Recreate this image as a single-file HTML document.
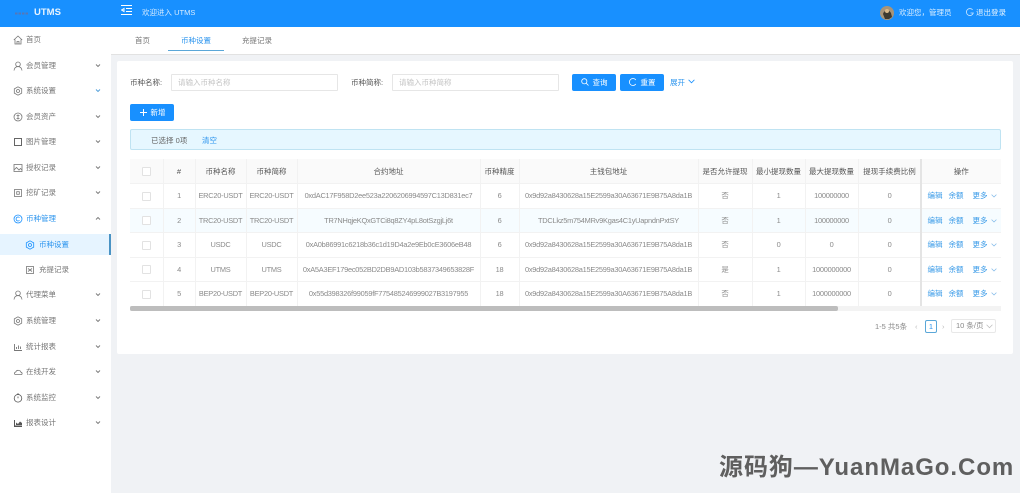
<!DOCTYPE html>
<html lang="zh-CN"><head><meta charset="utf-8"><title>UTMS</title>
<style>
*{box-sizing:border-box}
html,body{margin:0;padding:0;width:1024px;height:493px;overflow:hidden;background:#fff}
body{font-family:"Liberation Sans","Noto Sans CJK SC",sans-serif;font-size:7.500px;color:#595959;position:relative}
#w{position:absolute;left:0;top:0;width:1024px;height:493px;filter:blur(.35px)}
.a{position:absolute;white-space:nowrap}
.m{position:absolute;left:0;width:111px;height:20px;line-height:20px;color:#777}
.m svg.i{position:absolute;left:13px;top:5px}
.m span{position:absolute;left:26px}
.m svg.c{position:absolute;left:95px;top:7px}
table{position:absolute;left:130px;top:159px;width:871px;border-collapse:collapse;table-layout:fixed;font-size:7.400px;letter-spacing:-.24px;color:#8a8a8a}
td,th{border-bottom:1px solid #f2f2f2;border-right:1px solid #f2f2f2;text-align:center;padding:0;white-space:nowrap;overflow:hidden;height:24.500px}
th{background:#fafafa;font-weight:400;color:#555;font-size:7.500px;letter-spacing:0}
td.o{border-right:0;text-align:left;padding-left:6px;font-size:7.500px;letter-spacing:0;color:#3a9be8}
td.o span{display:inline-block;width:15px}
td.o span+span{margin-left:6px}
td.o span+span+span{margin-left:9px}
td.o svg{margin-left:3px;vertical-align:0}
.cb{display:inline-block;width:9px;height:9px;border:1px solid #e2e2e2;border-radius:1px;background:#fff;vertical-align:middle}
.btn{position:absolute;background:#1890ff;border-radius:2px;color:#fff;height:17px;line-height:17px;text-align:center}
.inp{position:absolute;top:74px;height:17px;border:1px solid #e6e6e6;border-radius:1px;background:#fff;color:#c4c4c4;line-height:16px;padding-left:6px}
</style></head><body><div id="w">
<div class="a" style="left:111px;top:0;width:909px;height:493px;background:#f0f2f5"></div>
<div class="a" style="left:0;top:0;width:111px;height:493px;background:#fff"></div>
<div class="a" style="left:0;top:0;width:1020px;height:27px;background:#1890ff"></div>

<svg class="a" style="left:15px;top:11px" width="14" height="5" viewBox="0 0 14 5"><path d="M0 2.500H14" stroke="#5577b8" stroke-width="2" stroke-dasharray="2.500 1"/></svg>
<div class="a" style="left:34px;top:6px;line-height:14px;font-size:9.500px;font-weight:700;color:#e8f4ff">UTMS</div>
<svg class="a" style="left:121px;top:5px" width="12" height="10" viewBox="0 0 12 10" fill="none" stroke="#fff" stroke-width="1"><path d="M0 .5H11M5 3.500H11M5 6.500H11M0 9.500H11M3 3.500L.6 5L3 6.500Z"/></svg>
<div class="a" style="left:142px;top:5.500px;line-height:13px;color:#d6ebff">欢迎进入 UTMS</div>
<svg class="a" style="left:880px;top:6px" width="14" height="14" viewBox="0 0 14 14"><circle cx="7" cy="7" r="7" fill="#a89478"/><path d="M3 8c1-4 6-5 8-1l1 4-3 2H5z" fill="#3d3a30"/><circle cx="7" cy="5" r="2" fill="#d9b98a"/></svg>
<div class="a" style="left:899px;top:6px;line-height:13px;color:#dcefff">欢迎您，管理员</div>
<svg class="a" style="left:966px;top:8px" width="8" height="9" viewBox="0 0 8 9" fill="none" stroke="#cfe8ff" stroke-width=".8"><path d="M6.600 1.800A3.500 3.500 0 1 0 7.300 5H4.500"/></svg>
<div class="a" style="left:976px;top:6px;line-height:13px;color:#e6f4ff">退出登录</div>

<!-- tabs -->
<div class="a" style="left:111px;top:27px;width:909px;height:28px;background:#fff;border-bottom:1px solid #e2e2e2"></div>
<div class="a" style="left:135px;top:33.500px;line-height:13px;color:#777">首页</div>
<div class="a" style="left:181px;top:33.500px;line-height:13px;color:#2b94ee">币种设置</div>
<div class="a" style="left:168px;top:50px;width:56px;height:1px;background:#5aa7d8"></div>
<div class="a" style="left:242px;top:33.500px;line-height:13px;color:#777">充提记录</div>

<!-- sidebar -->
<div class="m" style="top:30px"><svg class="i" width="10" height="10" viewBox="0 0 10 10" fill="none" stroke="#777" stroke-width=".8"><path d="M.8 5L5 1l4.200 4M2 4.500V9h6V4.500M4 9V6.500h2V9"/></svg><span>首页</span></div>
<div class="m" style="top:55.500px"><svg class="i" width="10" height="10" viewBox="0 0 10 10" fill="none" stroke="#777" stroke-width=".8"><circle cx="5" cy="3.300" r="2.300"/><path d="M1 9.500c.4-3 2-3.900 4-3.900s3.600.9 4 3.900"/></svg><span>会员管理</span><svg class="c" width="6" height="5" viewBox="0 0 6 5" fill="none" stroke="#777" stroke-width=".9"><path d="M1 1.500L3 3.500L5 1.500"/></svg></div>
<div class="m" style="top:81px"><svg class="i" width="10" height="10" viewBox="0 0 10 10" fill="none" stroke="#777" stroke-width=".8"><path d="M5 .8l3.700 2.100v4.200L5 9.200 1.300 7.100V2.900z"/><circle cx="5" cy="5" r="1.500"/></svg><span>系统设置</span><svg class="c" width="6" height="5" viewBox="0 0 6 5" fill="none" stroke="#4a9bd8" stroke-width=".9"><path d="M1 1.500L3 3.500L5 1.500"/></svg></div>
<div class="m" style="top:106.500px"><svg class="i" width="10" height="10" viewBox="0 0 10 10" fill="none" stroke="#777" stroke-width=".8"><circle cx="5" cy="5" r="4"/><path d="M3.500 3.500h3M3.500 6.500h3M5 2.500v5"/></svg><span>会员资产</span><svg class="c" width="6" height="5" viewBox="0 0 6 5" fill="none" stroke="#777" stroke-width=".9"><path d="M1 1.500L3 3.500L5 1.500"/></svg></div>
<div class="m" style="top:132px"><svg class="i" width="10" height="10" viewBox="0 0 10 10" fill="none" stroke="#555" stroke-width=".9"><rect x="1.500" y="1.500" width="7" height="7"/></svg><span>图片管理</span><svg class="c" width="6" height="5" viewBox="0 0 6 5" fill="none" stroke="#777" stroke-width=".9"><path d="M1 1.500L3 3.500L5 1.500"/></svg></div>
<div class="m" style="top:158px"><svg class="i" width="10" height="10" viewBox="0 0 10 10" fill="none" stroke="#777" stroke-width=".8"><rect x="1" y="1.500" width="8" height="7"/><path d="M1 7l2.500-2.500L6 7l1.500-1.500L9 7"/></svg><span>授权记录</span><svg class="c" width="6" height="5" viewBox="0 0 6 5" fill="none" stroke="#777" stroke-width=".9"><path d="M1 1.500L3 3.500L5 1.500"/></svg></div>
<div class="m" style="top:183px"><svg class="i" width="10" height="10" viewBox="0 0 10 10" fill="none" stroke="#777" stroke-width=".8"><rect x="1.500" y="1.500" width="7" height="7"/><rect x="3.700" y="3.700" width="2.600" height="2.600"/></svg><span>挖矿记录</span><svg class="c" width="6" height="5" viewBox="0 0 6 5" fill="none" stroke="#777" stroke-width=".9"><path d="M1 1.500L3 3.500L5 1.500"/></svg></div>
<div class="m" style="top:209px;color:#2b94ee"><svg class="i" width="10" height="10" viewBox="0 0 10 10" fill="none" stroke="#1890ff" stroke-width=".8"><circle cx="5" cy="5" r="4"/><path d="M6.500 3.600A2 2 0 1 0 6.500 6.400"/></svg><span>币种管理</span><svg class="c" width="6" height="5" viewBox="0 0 6 5" fill="none" stroke="#777" stroke-width=".9"><path d="M1 3.500L3 1.500L5 3.500"/></svg></div>
<div class="a" style="left:0;top:234px;width:111px;height:21px;background:#e6f4ff;border-right:2px solid #4a93c4"></div>
<div class="m" style="top:234.500px;color:#2b94ee"><svg class="i" style="left:25px" width="10" height="10" viewBox="0 0 10 10" fill="none" stroke="#1890ff" stroke-width=".8"><path d="M5 .8l3.700 2.100v4.200L5 9.200 1.300 7.100V2.900z"/><circle cx="5" cy="5" r="1.500"/></svg><span style="left:39px">币种设置</span></div>
<div class="m" style="top:260px"><svg class="i" style="left:25px" width="10" height="10" viewBox="0 0 10 10" fill="none" stroke="#777" stroke-width=".8"><rect x="1.500" y="1.500" width="7" height="7"/><path d="M3 3.500l4 3M7 3.500l-4 3"/></svg><span style="left:39px">充提记录</span></div>
<div class="m" style="top:285px"><svg class="i" width="10" height="10" viewBox="0 0 10 10" fill="none" stroke="#777" stroke-width=".8"><circle cx="5" cy="3.300" r="2.300"/><path d="M1 9.500c.4-3 2-3.900 4-3.900s3.600.9 4 3.900"/></svg><span>代理菜单</span><svg class="c" width="6" height="5" viewBox="0 0 6 5" fill="none" stroke="#777" stroke-width=".9"><path d="M1 1.500L3 3.500L5 1.500"/></svg></div>
<div class="m" style="top:311px"><svg class="i" width="10" height="10" viewBox="0 0 10 10" fill="none" stroke="#777" stroke-width=".8"><path d="M5 .8l3.700 2.100v4.200L5 9.200 1.300 7.100V2.900z"/><circle cx="5" cy="5" r="1.500"/></svg><span>系统管理</span><svg class="c" width="6" height="5" viewBox="0 0 6 5" fill="none" stroke="#777" stroke-width=".9"><path d="M1 1.500L3 3.500L5 1.500"/></svg></div>
<div class="m" style="top:337px"><svg class="i" width="10" height="10" viewBox="0 0 10 10" fill="none" stroke="#777" stroke-width=".9"><path d="M1.500 2v6.500H9M3.500 7V5M5.500 7V3.500M7.500 7V4.500"/></svg><span>统计报表</span><svg class="c" width="6" height="5" viewBox="0 0 6 5" fill="none" stroke="#777" stroke-width=".9"><path d="M1 1.500L3 3.500L5 1.500"/></svg></div>
<div class="m" style="top:362px"><svg class="i" width="10" height="10" viewBox="0 0 10 10" fill="none" stroke="#777" stroke-width=".8"><path d="M2.500 7.500H8C9.500 7.500 9.500 5.500 8 5.300 7.500 3 3.500 2.500 2.800 5 1 5.300 1 7.500 2.500 7.500Z"/></svg><span>在线开发</span><svg class="c" width="6" height="5" viewBox="0 0 6 5" fill="none" stroke="#777" stroke-width=".9"><path d="M1 1.500L3 3.500L5 1.500"/></svg></div>
<div class="m" style="top:388px"><svg class="i" width="10" height="10" viewBox="0 0 10 10" fill="none" stroke="#555" stroke-width=".8"><circle cx="5" cy="5.300" r="3.800"/><path d="M5 5.300V3.500M4 1h2"/></svg><span>系统监控</span><svg class="c" width="6" height="5" viewBox="0 0 6 5" fill="none" stroke="#777" stroke-width=".9"><path d="M1 1.500L3 3.500L5 1.500"/></svg></div>
<div class="m" style="top:413px"><svg class="i" width="10" height="10" viewBox="0 0 10 10"><path d="M1 2h1v5.500h7V9H1zM3 7V4.500L5 6l2-2.500L9 5v2z" fill="#555"/></svg><span>报表设计</span><svg class="c" width="6" height="5" viewBox="0 0 6 5" fill="none" stroke="#777" stroke-width=".9"><path d="M1 1.500L3 3.500L5 1.500"/></svg></div>

<!-- card -->
<div class="a" style="left:117px;top:61px;width:896px;height:293px;background:#fff;border-radius:2px"></div>
<div class="a" style="left:130px;top:76px;line-height:13px;color:#555">币种名称:</div>
<div class="inp" style="left:171px;width:167px">请输入币种名称</div>
<div class="a" style="left:351px;top:76px;line-height:13px;color:#555">币种简称:</div>
<div class="inp" style="left:392px;width:167px">请输入币种简称</div>
<div class="btn" style="left:572px;top:74px;width:44px;padding-left:12px"><svg class="a" style="left:9px;top:4px" width="8" height="8" viewBox="0 0 8 8" fill="none" stroke="#fff" stroke-width=".8"><circle cx="3.300" cy="3.300" r="2.600"/><path d="M5.200 5.200L7.500 7.500"/></svg>查询</div>
<div class="btn" style="left:620px;top:74px;width:44px;padding-left:12px"><svg class="a" style="left:9px;top:4px" width="8" height="8" viewBox="0 0 8 8" fill="none" stroke="#fff" stroke-width=".8"><path d="M6.800 2A3.500 3.500 0 1 0 6.800 6"/></svg>重置</div>
<div class="a" style="left:670px;top:76px;line-height:13px;color:#2b94ee">展开</div>
<svg class="a" style="left:688px;top:79px" width="7" height="5" viewBox="0 0 7 5" fill="none" stroke="#1890ff" stroke-width=".8"><path d="M.6 .8L3.500 3.800L6.400 .8"/></svg>
<div class="btn" style="left:130px;top:104px;width:44px;padding-left:12px"><svg class="a" style="left:10px;top:5px" width="7" height="7" viewBox="0 0 7 7" stroke="#fff" stroke-width="1"><path d="M3.500 0V7M0 3.500H7"/></svg>新增</div>
<div class="a" style="left:130px;top:129px;width:871px;height:21px;background:#e6f7ff;border:1px solid #bfe3f2;border-radius:2px"></div>
<div class="a" style="left:151px;top:134px;line-height:13px;color:#666">已选择 0项</div>
<div class="a" style="left:202px;top:134px;line-height:13px;color:#2b94ee">清空</div>

<table>
<colgroup><col style="width:33px"><col style="width:32px"><col style="width:51px"><col style="width:51px"><col style="width:183px"><col style="width:39px"><col style="width:179px"><col style="width:54px"><col style="width:53px"><col style="width:53px"><col style="width:63px"><col style="width:80px"></colgroup>
<tr><th><i class="cb"></i></th><th>#</th><th>币种名称</th><th>币种简称</th><th>合约地址</th><th>币种精度</th><th>主钱包地址</th><th>是否允许提现</th><th>最小提现数量</th><th>最大提现数量</th><th>提现手续费比例</th><th style="border-right:0">操作</th></tr>
<tr><td><i class="cb"></i></td><td>1</td><td>ERC20-USDT</td><td>ERC20-USDT</td><td>0xdAC17F958D2ee523a2206206994597C13D831ec7</td><td>6</td><td>0x9d92a8430628a15E2599a30A63671E9B75A8da1B</td><td>否</td><td>1</td><td>100000000</td><td>0</td><td class="o"><span>编辑</span><span>余额</span><span>更多</span><svg width="6" height="4" viewBox="0 0 6 4" fill="none" stroke="#7fb8e8" stroke-width=".7"><path d="M.6 .6L3 3L5.400 .6"/></svg></td></tr>
<tr style="background:#f6fcff"><td><i class="cb"></i></td><td>2</td><td>TRC20-USDT</td><td>TRC20-USDT</td><td>TR7NHqjeKQxGTCi8q8ZY4pL8otSzgjLj6t</td><td>6</td><td>TDCLkz5m754MRv9Kgas4C1yUapndnPxtSY</td><td>否</td><td>1</td><td>100000000</td><td>0</td><td class="o"><span>编辑</span><span>余额</span><span>更多</span><svg width="6" height="4" viewBox="0 0 6 4" fill="none" stroke="#7fb8e8" stroke-width=".7"><path d="M.6 .6L3 3L5.400 .6"/></svg></td></tr>
<tr><td><i class="cb"></i></td><td>3</td><td>USDC</td><td>USDC</td><td>0xA0b86991c6218b36c1d19D4a2e9Eb0cE3606eB48</td><td>6</td><td>0x9d92a8430628a15E2599a30A63671E9B75A8da1B</td><td>否</td><td>0</td><td>0</td><td>0</td><td class="o"><span>编辑</span><span>余额</span><span>更多</span><svg width="6" height="4" viewBox="0 0 6 4" fill="none" stroke="#7fb8e8" stroke-width=".7"><path d="M.6 .6L3 3L5.400 .6"/></svg></td></tr>
<tr><td><i class="cb"></i></td><td>4</td><td>UTMS</td><td>UTMS</td><td>0xA5A3EF179ec052BD2DB9AD103b5837349653828F</td><td>18</td><td>0x9d92a8430628a15E2599a30A63671E9B75A8da1B</td><td>是</td><td>1</td><td>1000000000</td><td>0</td><td class="o"><span>编辑</span><span>余额</span><span>更多</span><svg width="6" height="4" viewBox="0 0 6 4" fill="none" stroke="#7fb8e8" stroke-width=".7"><path d="M.6 .6L3 3L5.400 .6"/></svg></td></tr>
<tr><td><i class="cb"></i></td><td>5</td><td>BEP20-USDT</td><td>BEP20-USDT</td><td>0x55d398326f99059fF775485246999027B3197955</td><td>18</td><td>0x9d92a8430628a15E2599a30A63671E9B75A8da1B</td><td>否</td><td>1</td><td>1000000000</td><td>0</td><td class="o"><span>编辑</span><span>余额</span><span>更多</span><svg width="6" height="4" viewBox="0 0 6 4" fill="none" stroke="#7fb8e8" stroke-width=".7"><path d="M.6 .6L3 3L5.400 .6"/></svg></td></tr>
</table>
<div class="a" style="left:920px;top:159px;width:2px;height:147px;background:#e4e4e4"></div>
<div class="a" style="left:130px;top:306px;width:871px;height:5px;background:#f3f3f3"></div>
<div class="a" style="left:130px;top:306px;width:708px;height:5px;background:#bdbdbd;border-radius:2px"></div>

<!-- pagination -->
<div class="a" style="left:875px;top:320px;line-height:13px;color:#888">1-5 共5条</div>
<div class="a" style="left:915px;top:320px;line-height:13px;color:#bbb">‹</div>
<div class="a" style="left:925px;top:320px;width:12px;height:13px;border:1px solid #5aa7d8;border-radius:2px;line-height:11px;text-align:center;color:#2b94ee">1</div>
<div class="a" style="left:942px;top:320px;line-height:13px;color:#bbb">›</div>
<div class="a" style="left:951px;top:319px;width:45px;height:14px;border:1px solid #e8e8e8;border-radius:2px;line-height:12px;padding-left:4px;color:#888">10 条/页</div>
<svg class="a" style="left:986px;top:324px" width="7" height="5" viewBox="0 0 7 5" fill="none" stroke="#bbb" stroke-width=".7"><path d="M.6 .8L3.500 3.800L6.400 .8"/></svg>

<div class="a" style="left:719px;top:453px;line-height:30px;font-size:24px;font-weight:700;color:#5f5f5f;letter-spacing:.95px">源码狗—YuanMaGo.Com</div>
</div></body></html>
